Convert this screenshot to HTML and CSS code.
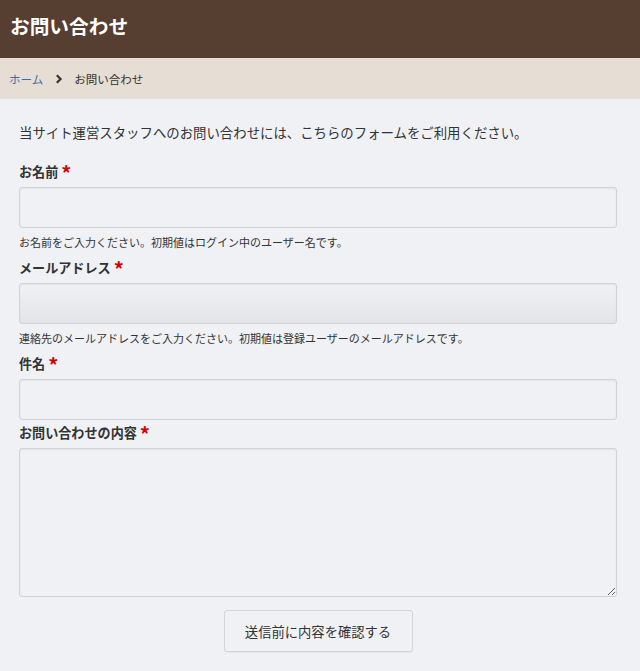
FILE: index.html
```html
<!DOCTYPE html>
<html lang="ja">
<head>
    <meta charset="UTF-8">
    <meta name="viewport" content="width=device-width, initial-scale=1.0">
    <title>お問い合わせ</title>
    <link rel="stylesheet" href="styles.css">
</head>
<body>
    <header class="page-header">
        <h1>お問い合わせ</h1>
    </header>

    <nav class="breadcrumb">
        <a href="#">ホーム</a>
        <svg class="crumb-sep" width="8" height="10" viewBox="0 0 8 10"><path d="M1.8 1.2 L5.6 5 L1.8 8.8" fill="none" stroke="#333" stroke-width="2.2"/></svg>
        <span>お問い合わせ</span>
    </nav>

    <main class="content">
        <p class="intro">当サイト運営スタッフへのお問い合わせには、こちらのフォームをご利用ください。</p>

        <form class="contact-form">
            <div class="field">
                <label for="name">お名前 <span class="req">*</span></label>
                <input type="text" id="name">
                <p class="help">お名前をご入力ください。初期値はログイン中のユーザー名です。</p>
            </div>

            <div class="field">
                <label for="email">メールアドレス <span class="req">*</span></label>
                <input type="email" id="email" class="filled">
                <p class="help">連絡先のメールアドレスをご入力ください。初期値は登録ユーザーのメールアドレスです。</p>
            </div>

            <div class="field">
                <label for="subject">件名 <span class="req">*</span></label>
                <input type="text" id="subject">
            </div>

            <div class="field">
                <label for="message">お問い合わせの内容 <span class="req">*</span></label>
                <textarea id="message"></textarea>
            </div>

            <div class="actions">
                <button type="button" class="button">送信前に内容を確認する</button>
            </div>
        </form>
    </main>
</body>
</html>
```

FILE: styles.css
```css
body {
    font-family: "Noto Sans CJK JP", "Noto Sans", sans-serif;
    background-color: #eff1f5;
    color: #333333;
    margin: 0;
    padding: 0;
}
.page-header {
    background-color: #563e30;
    height: 58px;
    display: flex;
    align-items: center;
    padding: 0 10px;
}
.page-header h1 {
    margin: 0 0 8px;
    font-size: 19.7px;
    font-weight: bold;
    color: #ffffff;
}
.breadcrumb {
    background-color: #e6ddd4;
    height: 41px;
    display: flex;
    align-items: center;
    padding: 0 9px;
    font-size: 11.5px;
    color: #333333;
}
.breadcrumb a {
    color: #3b6ea5;
    text-decoration: none;
}
.crumb-sep {
    margin: 0 11px 0 12px;
}
.content {
    padding: 23px 23px 20px 19px;
}
.intro {
    margin: 0 0 20px;
    font-size: 13.4px;
    line-height: 20px;
}
.field {
    margin-bottom: 3px;
}
label {
    display: block;
    font-size: 13.1px;
    font-weight: bold;
    line-height: 20px;
    height: 20px;
    margin-bottom: 5px;
}
.req {
    color: #d40000;
    font-size: 20px;
    line-height: 10px;
    vertical-align: -4px;
}
input, textarea {
    display: block;
    box-sizing: border-box;
    width: 100%;
    height: 41px;
    margin: 0;
    border: 1px solid #d0d2d6;
    border-radius: 3px;
    background-color: #f0f1f4;
    box-shadow: inset 0 1px 2px rgba(0, 0, 0, 0.06);
    font-family: inherit;
    font-size: 14px;
}
input.filled {
    background-image: linear-gradient(#f0f1f4, #e3e4e7);
}
textarea {
    height: 149px;
    resize: vertical;
}
.help {
    margin: 6px 0 8px;
    font-size: 11px;
    line-height: 16px;
}
.actions {
    text-align: center;
    margin-top: 13px;
}
.button {
    width: 189px;
    height: 42px;
    background-color: #f0f1f4;
    border: 1px solid #d3d5d9;
    border-radius: 3px;
    box-shadow: 0 1px 1px rgba(0, 0, 0, 0.05);
    color: #333333;
    font-family: inherit;
    font-size: 13.3px;
    cursor: pointer;
}
```
